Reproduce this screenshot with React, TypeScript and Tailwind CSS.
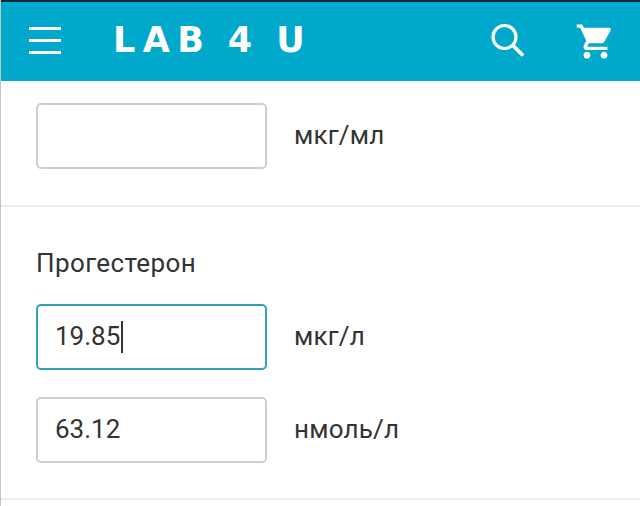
const FONT = "font-['Roboto',sans-serif]"

function Field({ value, unit, focused }: { value?: string; unit: string; focused?: boolean }) {
  return (
    <div className="flex items-center">
      <div
        className={`flex h-[66px] w-[231px] items-center rounded-[5px] border-2 bg-white pl-[17px] text-[26px] text-[#333] ${
          focused ? 'border-[#2ea3b8]' : 'border-[#cfcfcf]'
        }`}
      >
        <span className="mb-[2px]">{value}</span>
        {focused && <span className="ml-[1px] h-[32px] w-[2px] bg-[#333]" />}
      </div>
      <span className="mb-[2px] ml-[27px] text-[26px] tracking-[0.2px] text-[#333]">{unit}</span>
    </div>
  )
}

export default function App() {
  return (
    <div className={`${FONT} h-[506px] w-[640px] overflow-hidden border-l border-l-[#c4c4c4] bg-white`}>
      {/* шапка */}
      <header className="-ml-px flex h-[81px] items-center border-t-2 border-t-[#0b2a3a] bg-[#00a9cc] pl-[29px] pr-[24px] text-white">
        <div className="mb-[3px] flex w-[32px] flex-col gap-[9px]">
          <span className="h-[3px] bg-white" />
          <span className="h-[3px] bg-white" />
          <span className="h-[3px] bg-white" />
        </div>
        <div className="mb-[3px] ml-[52px] font-['DejaVu_Sans',sans-serif] text-[35px] font-bold leading-none tracking-[7.4px] [word-spacing:-3px] whitespace-pre">
          LAB 4 U
        </div>
        <svg className="mb-[4px] ml-auto h-[34px] w-[34px]" viewBox="0 0 34 34" fill="none" stroke="white" strokeWidth="3.2">
          <circle cx="14.5" cy="14" r="11.5" />
          <path d="M23 22.5 L32 31.5" strokeLinecap="round" strokeWidth="3.8" />
        </svg>
        <svg className="ml-[51px] h-[41px] w-[41px]" viewBox="0 0 24 24" fill="white">
          <path d="M7 18c-1.1 0-1.99.9-1.99 2S5.9 22 7 22s2-.9 2-2-.9-2-2-2zM1 2v2h2l3.6 7.59-1.35 2.45c-.16.28-.25.61-.25.96 0 1.1.9 2 2 2h12v-2H7.42c-.14 0-.25-.11-.25-.25l.03-.12.9-1.63h7.45c.75 0 1.41-.41 1.75-1.03l3.58-6.49A1 1 0 0 0 20 4H5.21l-.94-2H1zm16 16c-1.1 0-1.99.9-1.99 2s.89 2 1.99 2 2-.9 2-2-.9-2-2-2z" />
        </svg>
      </header>

      {/* первый блок */}
      <section className="border-b-2 border-b-[#ececec] pl-[35px] pt-[22px] pb-[36px]">
        <Field unit="мкг/мл" />
      </section>

      {/* прогестерон */}
      <section className="border-b-2 border-b-[#ececec] pl-[35px] pt-[40px] pb-[35px]">
        <div className="mb-[25px] text-[26px] leading-[32px] tracking-[0.4px] text-[#333]">Прогестерон</div>
        <div className="flex flex-col gap-[27px]">
          <Field value="19.85" unit="мкг/л" focused />
          <Field value="63.12" unit="нмоль/л" />
        </div>
      </section>
    </div>
  )
}
